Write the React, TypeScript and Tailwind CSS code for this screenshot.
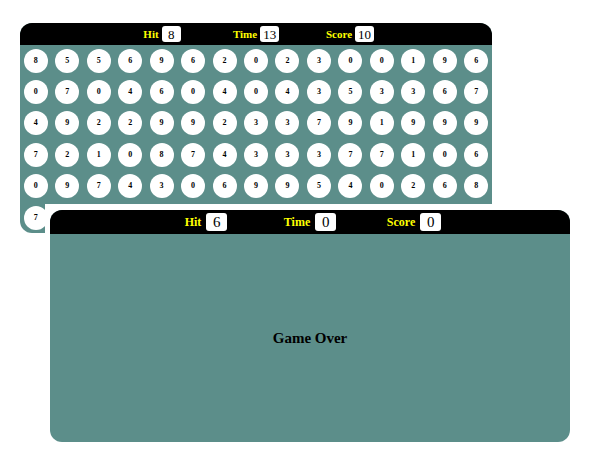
import React from "react";

// last row sits under the game-over overlay, only its first ball shows
const rows: (number | null)[][] = [
  [8, 5, 5, 6, 9, 6, 2, 0, 2, 3, 0, 0, 1, 9, 6],
  [0, 7, 0, 4, 6, 0, 4, 0, 4, 3, 5, 3, 3, 6, 7],
  [4, 9, 2, 2, 9, 9, 2, 3, 3, 7, 9, 1, 9, 9, 9],
  [7, 2, 1, 0, 8, 7, 4, 3, 3, 3, 7, 7, 1, 0, 6],
  [0, 9, 7, 4, 3, 0, 6, 9, 9, 5, 4, 0, 2, 6, 8],
  [7, null, null, null, null, null, null, null, null, null, null, null, null, null, null],
];

const serif = "font-['Liberation_Serif','Times_New_Roman',serif]";

function Stat({ label, value, big }: { label: string; value: number; big?: boolean }) {
  return (
    <div className={`flex items-center justify-center ${big ? "w-[104px] gap-[5px]" : "w-[94px] gap-[3px]"}`}>
      <span className={`font-bold leading-none text-[#ffff00] ${big ? "text-[12px]" : "text-[11px]"}`}>{label}</span>
      <span
        className={`flex items-center justify-center rounded-[3px] bg-white leading-none text-black ${
          big ? "h-[18px] w-[21px] text-[15px]" : "h-[16px] w-[19px] text-[13px]"
        }`}
      >
        {value}
      </span>
    </div>
  );
}

function Header({ hit, time, score, big }: { hit: number; time: number; score: number; big?: boolean }) {
  return (
    <div className={`flex items-center justify-center bg-black ${big ? "h-[24px]" : "h-[22px]"}`}>
      <Stat label="Hit" value={hit} big={big} />
      <Stat label="Time" value={time} big={big} />
      <Stat label="Score" value={score} big={big} />
    </div>
  );
}

export default function App() {
  return (
    <div className={`relative h-[450px] w-[600px] bg-white ${serif}`}>
      <div className="pl-[20px] pt-[23px]">
        {/* board */}
        <div className="h-[210px] w-[472px] overflow-hidden rounded-[12px] bg-[#5c8e8a]">
          <Header hit={8} time={13} score={10} />
          <div className="grid grid-cols-[repeat(15,1fr)]">
            {rows.flat().map((n, i) => (
              <div key={i} className="flex h-[31.4px] items-center justify-center">
                <span className="flex h-[24px] w-[24px] items-center justify-center rounded-full bg-white text-[8px] font-bold leading-none text-black">
                  {n}
                </span>
              </div>
            ))}
          </div>
        </div>
      </div>

      {/* game over overlay */}
      <div className="absolute left-[45px] top-[204px] bg-white px-[5px] pt-[6px] pb-[5px]">
        <div className="flex h-[232px] w-[520px] flex-col overflow-hidden rounded-[12px] bg-[#5c8e8a]">
          <Header hit={6} time={0} score={0} big />
          <div className="flex flex-1 items-center justify-center">
            <span className="text-[15px] font-bold text-black">Game Over</span>
          </div>
        </div>
      </div>
    </div>
  );
}
